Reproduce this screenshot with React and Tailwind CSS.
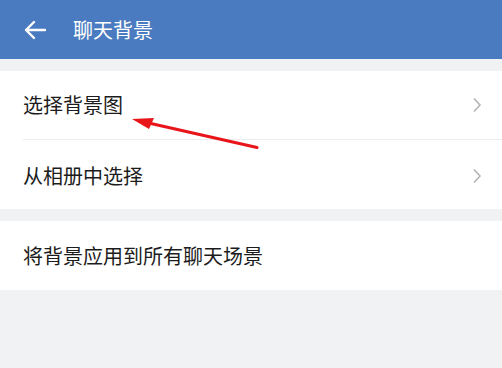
const rows = [
  { id: 'pick', label: '选择背景图' },
  { id: 'album', label: '从相册中选择' },
];

function Chevron() {
  return (
    <svg width="10" height="16" viewBox="0 0 10 16" className="shrink-0">
      <path d="M2 1.5 L8 8 L2 14.5" fill="none" stroke="#b4b4b4" strokeWidth="1.6" />
    </svg>
  );
}

export default function App() {
  return (
    <div
      className="relative w-[502px] h-[368px] bg-[#f1f2f4] overflow-hidden"
      style={{ fontFamily: '"Noto Sans CJK SC", "Noto Sans", sans-serif' }}
    >
      {/* Header */}
      <div className="h-[59px] bg-[#4a7bc0] flex items-center pl-[23px]">
        <svg width="24" height="20" viewBox="0 0 24 20">
          <path d="M22 10 H3 M11 2 L3 10 L11 18" fill="none" stroke="#fff" strokeWidth="2.4" strokeLinecap="round" strokeLinejoin="round" />
        </svg>
        <span className="ml-[26px] text-white text-[20px] leading-none">聊天背景</span>
      </div>

      <div className="h-[12px]" />

      {/* Group 1 */}
      <div className="bg-white">
        {rows.map((r, i) => (
          <div key={r.id} className="pl-[23px]">
            <div
              className={`h-[69px] flex items-center justify-between pr-[20px] ${
                i === 0 ? 'border-b border-[#ececec]' : 'pt-[3px]'
              }`}
            >
              <span className="text-[20px] text-[#1c1c1c] leading-none">{r.label}</span>
              <Chevron />
            </div>
          </div>
        ))}
      </div>

      <div className="h-[12px]" />

      {/* Group 2 */}
      <div className="bg-white h-[69px] flex items-center pl-[23px]">
        <span className="text-[20px] text-[#1c1c1c] leading-none">将背景应用到所有聊天场景</span>
      </div>

      {/* Red annotation arrow */}
      <svg className="absolute left-0 top-0 pointer-events-none" width="502" height="368">
        <line x1="257" y1="147.5" x2="142" y2="121.5" stroke="#e8161a" strokeWidth="3.2" strokeLinecap="round" />
        <polygon points="132,119 154,118 149,129" fill="#e8161a" />
      </svg>
    </div>
  );
}
